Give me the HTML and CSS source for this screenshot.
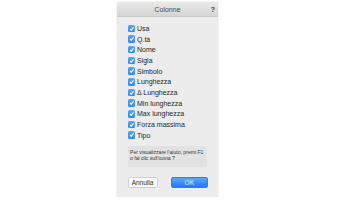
FILE: index.html
```html
<!DOCTYPE html>
<html>
<head>
<meta charset="utf-8">
<link rel="stylesheet" href="styles.css">
</head>
<body>
<div class="dialog">
  <div class="titlebar">
    <span></span>
    <span class="title">Colonne</span>
    <span class="help">?</span>
  </div>
  <div class="list">
    <div class="row"><span class="cb"><svg viewBox="0 0 8 8"><path d="M2 4.2 L3.4 5.7 L6 2.3" fill="none" stroke="#fff" stroke-width="1.1"/></svg></span>Usa</div>
    <div class="row"><span class="cb"><svg viewBox="0 0 8 8"><path d="M2 4.2 L3.4 5.7 L6 2.3" fill="none" stroke="#fff" stroke-width="1.1"/></svg></span>Q.tà</div>
    <div class="row"><span class="cb"><svg viewBox="0 0 8 8"><path d="M2 4.2 L3.4 5.7 L6 2.3" fill="none" stroke="#fff" stroke-width="1.1"/></svg></span>Nome</div>
    <div class="row"><span class="cb"><svg viewBox="0 0 8 8"><path d="M2 4.2 L3.4 5.7 L6 2.3" fill="none" stroke="#fff" stroke-width="1.1"/></svg></span>Sigla</div>
    <div class="row"><span class="cb"><svg viewBox="0 0 8 8"><path d="M2 4.2 L3.4 5.7 L6 2.3" fill="none" stroke="#fff" stroke-width="1.1"/></svg></span>Simbolo</div>
    <div class="row"><span class="cb"><svg viewBox="0 0 8 8"><path d="M2 4.2 L3.4 5.7 L6 2.3" fill="none" stroke="#fff" stroke-width="1.1"/></svg></span>Lunghezza</div>
    <div class="row"><span class="cb"><svg viewBox="0 0 8 8"><path d="M2 4.2 L3.4 5.7 L6 2.3" fill="none" stroke="#fff" stroke-width="1.1"/></svg></span>Δ Lunghezza</div>
    <div class="row"><span class="cb"><svg viewBox="0 0 8 8"><path d="M2 4.2 L3.4 5.7 L6 2.3" fill="none" stroke="#fff" stroke-width="1.1"/></svg></span>Min lunghezza</div>
    <div class="row"><span class="cb"><svg viewBox="0 0 8 8"><path d="M2 4.2 L3.4 5.7 L6 2.3" fill="none" stroke="#fff" stroke-width="1.1"/></svg></span>Max lunghezza</div>
    <div class="row"><span class="cb"><svg viewBox="0 0 8 8"><path d="M2 4.2 L3.4 5.7 L6 2.3" fill="none" stroke="#fff" stroke-width="1.1"/></svg></span>Forza massima</div>
    <div class="row"><span class="cb"><svg viewBox="0 0 8 8"><path d="M2 4.2 L3.4 5.7 L6 2.3" fill="none" stroke="#fff" stroke-width="1.1"/></svg></span>Tipo</div>
  </div>
  <div class="hint"><div>Per visualizzare l'aiuto, premi F1</div><div>o fai clic sull'icona ?</div></div>
  <div class="buttons">
    <button class="btn cancel">Annulla</button>
    <button class="btn ok">OK</button>
  </div>
</div>
</body>
</html>
```
FILE: styles.css
```css
html, body {
  margin: 0;
  padding: 0;
  background: #ffffff;
}
body {
  font-family: "Liberation Sans", Arial, sans-serif;
  color: #222;
  padding-top: 2px;
}
.dialog {
  margin-left: 117px;
  width: 101px;
  height: 195px;
  background: #ececec;
  display: flex;
  flex-direction: column;
  box-shadow: 0 0 1px rgba(0,0,0,0.25);
}
.titlebar {
  height: 15px;
  box-sizing: border-box;
  background: linear-gradient(#e9e9e9, #d5d5d5);
  border-bottom: 1px solid #c9c9c9;
  display: grid;
  grid-template-columns: 1fr auto 1fr;
  align-items: center;
  font-size: 7px;
}
.title {
  color: #4b4b4b;
}
.help {
  justify-self: end;
  padding-right: 3px;
  font-weight: bold;
  color: #3a3a3a;
}
.list {
  padding: 6px 0 0 10.5px;
}
.row {
  height: 10.7px;
  display: flex;
  align-items: center;
  gap: 2px;
  font-size: 7px;
  color: #1e1e1e;
}
.cb {
  width: 7.5px;
  height: 7.5px;
  border-radius: 1.5px;
  background: linear-gradient(#5aa4fb, #2f86f6);
  display: flex;
}
.cb svg {
  width: 100%;
  height: 100%;
}
.hint {
  margin: 5px 11px 0 11px;
  height: 21px;
  box-sizing: border-box;
  padding: 3px 2px;
  background: #e2e2e2;
  border-radius: 2px;
  font-size: 5.1px;
  line-height: 6.5px;
  color: #333;
  white-space: nowrap;
}
.buttons {
  margin: 10px 10px 0 10.5px;
  display: flex;
  justify-content: space-between;
}
.btn {
  height: 11px;
  padding: 0;
  font-family: "Liberation Sans", Arial, sans-serif;
  font-size: 6.5px;
  border-radius: 2px;
  display: flex;
  align-items: center;
  justify-content: center;
}
.cancel {
  width: 30px;
  background: #ffffff;
  border: 1px solid #d0d0d0;
  color: #2a2a2a;
}
.ok {
  width: 37px;
  background: linear-gradient(#5aa6fc, #1e7bf5);
  border: 1px solid #2a7ff0;
  color: #e8f1ff;
  letter-spacing: 0.4px;
}
```
